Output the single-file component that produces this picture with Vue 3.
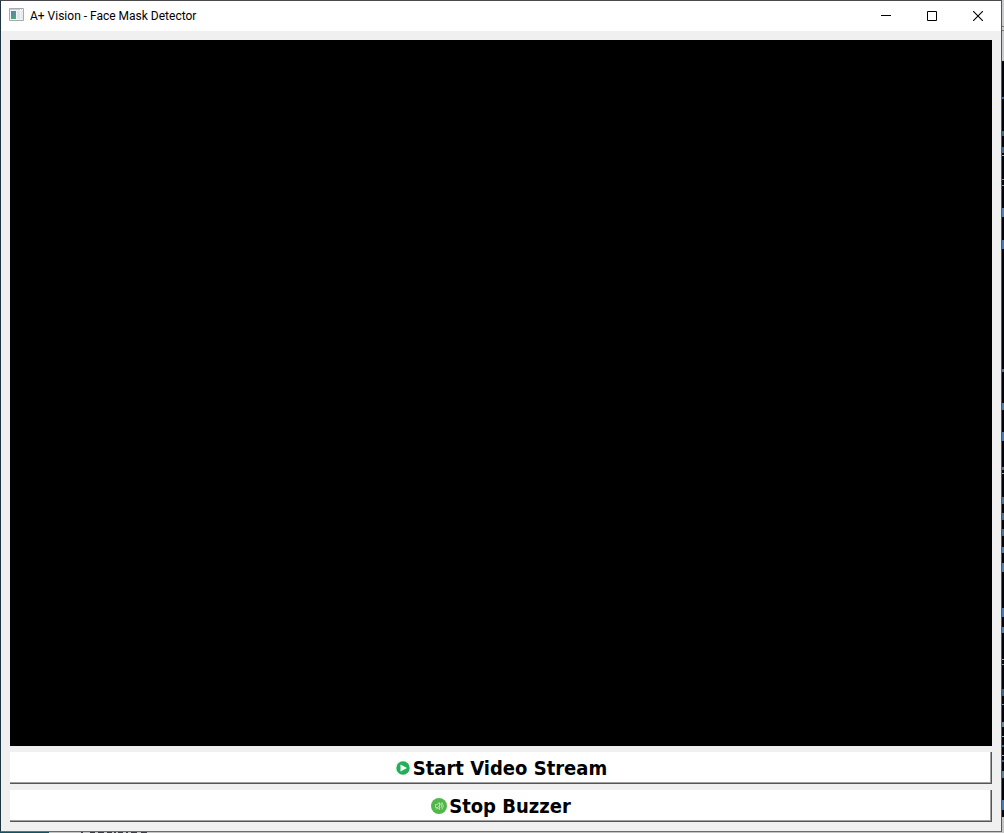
<script setup>
import { ref } from 'vue'

const title = 'A+ Vision - Face Mask Detector'
const streaming = ref(false)

// Rows where the editor behind the window shows past its right edge
const specks = [
  [97, 2, '#3d6ea5'], [131, 5, '#49667a'], [147, 6, '#3f6285'], [155, 1, '#a0b4b8'],
  [179, 1, '#8fa3a8'], [185, 1, '#8fa3a8'], [208, 9, '#5583ad'], [240, 9, '#4a78b0'],
  [369, 3, '#5b7388'], [403, 7, '#4f7fae'], [432, 9, '#4a78b0'], [467, 3, '#5b7388'],
  [473, 1, '#a0b4b8'], [497, 7, '#4f6f90'], [513, 7, '#4f6f90'], [529, 7, '#4f6f90'],
  [547, 6, '#4f7fae'], [563, 9, '#4f7fae'], [608, 9, '#4a78b0'], [627, 6, '#4f7fae'],
  [659, 1, '#a0b4b8'], [664, 1, '#7f9cb0'], [689, 7, '#3f6285'], [704, 1, '#7f9cb0'],
  [722, 5, '#6f8790'], [736, 1, '#a0b4b8'], [745, 2, '#3f6285'], [755, 1, '#a0b4b8'],
  [760, 2, '#3f6285'], [771, 7, '#5b7f90'], [800, 10, '#4a78b0']
]
</script>

<template>
  <div class="desktop">
    <main class="window">
      <header class="titlebar">
        <svg class="app-icon" width="16" height="16" viewBox="0 0 16 16" aria-hidden="true">
          <defs>
            <linearGradient id="pane" x1="0" y1="0" x2="0.6" y2="1">
              <stop offset="0" stop-color="#4f82b0" />
              <stop offset="1" stop-color="#52a578" />
            </linearGradient>
          </defs>
          <path d="M.5 .5h14v12H.5z" fill="#f2f3f4" stroke="#a7abae" />
          <path d="M1 1h13v1H1z" fill="#c9cdd0" />
          <path d="M2 3h5v8H2z" fill="url(#pane)" />
          <path d="M8 3h3v8H8z" fill="#dfe7ec" />
          <path d="M12 3h2v8h-2z" fill="#e9eaeb" />
          <path d="M11 1h1v1h-1zM13 1h1v1h-1z" fill="#fff" />
        </svg>
        <h1>{{ title }}</h1>
        <button class="control" type="button" aria-label="Minimize">
          <svg width="10" height="10" viewBox="0 0 10 10"><path d="M0 5h10v1H0z" transform="translate(0 -1)" /></svg>
        </button>
        <button class="control" type="button" aria-label="Maximize">
          <svg width="10" height="10" viewBox="0 0 10 10"><path d="M.5.5h9v9h-9z" fill="none" stroke="#000" /></svg>
        </button>
        <button class="control" type="button" aria-label="Close">
          <svg width="10" height="10" viewBox="0 0 10 10"><path d="M0 0l10 10M10 0L0 10" fill="none" stroke="#000" stroke-width="1.1" /></svg>
        </button>
      </header>
      <div class="content">
        <section class="video" aria-label="Video stream"></section>
        <button class="action" type="button" @click="streaming = true">
          <svg width="16" height="16" viewBox="0 0 16 16" aria-hidden="true">
            <path d="M0 1h16v14H0z" fill="#f8f8f8" />
            <circle cx="8" cy="8" r="6.7" fill="#23ae58" />
            <path d="M5.500 4.500v7L12 8z" fill="#fff" />
          </svg>
          Start Video Stream
        </button>
        <button class="action" type="button">
          <svg width="16" height="16" viewBox="0 0 16 16" aria-hidden="true">
            <circle cx="8" cy="8" r="8" fill="#50b848" />
            <path d="M4.500 6.500H6L8.500 4.500v7L6 9.500H4.500zM10 6.200q1.500 1.800 0 3.600M11 4.500q2.500 3.500 0 7M5 11.500l6-7" fill="none" stroke="#c9e9c5" stroke-width=".8" />
          </svg>
          Stop Buzzer
        </button>
      </div>
    </main>
    <svg class="behind" width="2" height="833" viewBox="0 0 2 833" aria-hidden="true">
      <path d="M0 0h2v833H0z" fill="#02030c" />
      <path d="M0 0h2v61H0z" fill="#c9cbcc" />
      <path d="M0 26h2v1H0zM0 30h2v1H0z" fill="#777" />
      <rect v-for="s in specks" :key="s[0]" x="0" :y="s[0]" width="2" :height="s[1]" :fill="s[2]" />
      <path d="M0 817h2v16H0z" fill="#c4c4c4" />
    </svg>
    <div class="below">
      <svg width="150" height="1" viewBox="0 0 150 1" aria-hidden="true">
        <path d="M81 0h2v1h-2zM90 0h5v1h-5zM98 0h6v1h-6zM107 0h5v1h-5zM114 0h2v1h-2zM118 0h5v1h-5zM126 0h2v1h-2zM131 0h6v1h-6zM141 0h6v1h-6z" fill="#3a3a44" />
      </svg>
    </div>
  </div>
</template>

<style>
body {
  background: #c8c8c8;
}
</style>

<style scoped>
.desktop {
  display: grid;
  grid-template-columns: 1fr 2px;
  grid-template-rows: 1fr 1px;
  height: 100vh;
  overflow: hidden;
}
.window {
  display: flex;
  flex-direction: column;
  min-height: 0;
  border: 1px solid #4a4a4d;
  border-left-color: #20343f;
  border-right-color: #555;
  border-bottom-color: #6c6c6c;
  background: #f0f0f0;
}
.titlebar {
  display: flex;
  align-items: center;
  height: 30px;
  padding-left: 8px;
  background: #fff;
}
.app-icon {
  margin-right: 5px;
}
h1 {
  flex: 1;
  margin: 0;
  font: 12px/16px Roboto, "Open Sans", sans-serif;
  color: #000;
}
.control {
  display: flex;
  align-items: center;
  justify-content: center;
  width: 46px;
  height: 30px;
  padding: 0;
  border: 0;
  background: #fff;
}
.content {
  display: flex;
  flex: 1;
  flex-direction: column;
  gap: 6px;
  min-height: 0;
  padding: 9px;
}
.video {
  flex: 1;
  background: #000;
}
.action {
  display: flex;
  align-items: center;
  justify-content: center;
  gap: 2px;
  height: 32px;
  padding: 0;
  border: 0;
  background: #fff;
  box-shadow: inset -1px -1px #555, inset -2px -2px #a0a0a0;
  font: bold 20px/32px "DejaVu Sans Condensed", "Noto Sans", sans-serif;
  color: #000;
}
.behind {
  grid-row: 1 / 3;
  grid-column: 2;
}
.below {
  display: flex;
  grid-row: 2;
  grid-column: 1;
  background: linear-gradient(to right, #155060 49px, #c4c4c4 49px);
}
</style>
